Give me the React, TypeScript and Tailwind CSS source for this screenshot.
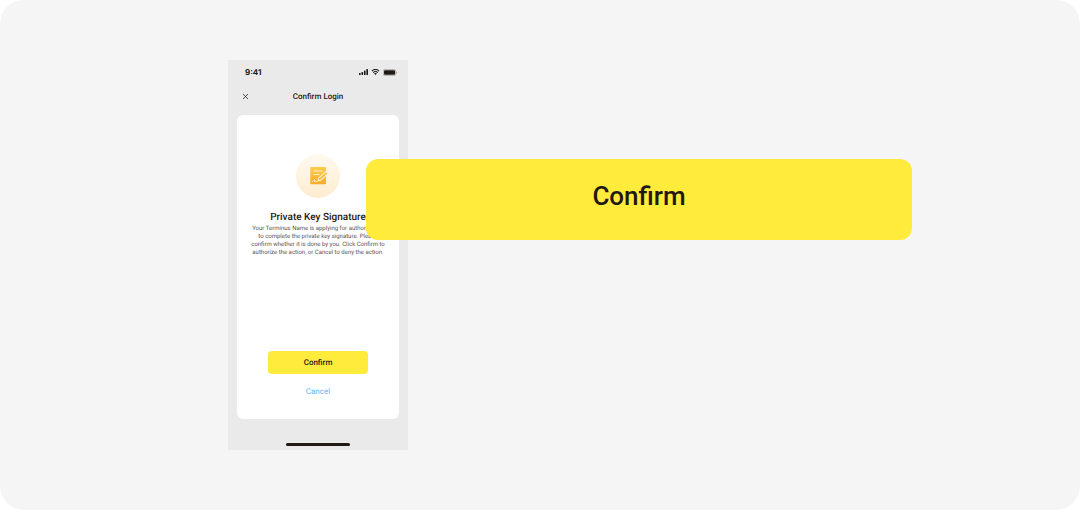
function StatusIcons() {
  return (
    <div className="flex items-center gap-[3px] text-[#1f1814]" aria-hidden="true">
      <svg className="h-[6px] w-[9px]" viewBox="0 0 18 12" fill="currentColor">
        <rect x="0" y="8" width="3.200" height="4" rx="1" />
        <rect x="5" y="6" width="3.200" height="6" rx="1" />
        <rect x="10" y="3" width="3.200" height="9" rx="1" />
        <rect x="14.800" y="0" width="3.200" height="12" rx="1" />
      </svg>
      <svg className="h-[6px] w-[9px]" viewBox="0 0 16 12" fill="none" stroke="currentColor" strokeWidth="2.200">
        <path d="M.8 4.200C5 .4 11 .4 15.200 4.200" />
        <path d="M3.400 7.200c2.600-2.400 6.600-2.400 9.200 0" />
        <path d="M5.400 9.100 8 11.800l2.600-2.700c-1.500-1.300-3.700-1.300-5.200 0Z" fill="currentColor" stroke="none" />
      </svg>
      <svg className="h-[7px] w-[14px]" viewBox="0 0 28 14">
        <rect x=".5" y=".8" width="25" height="12.400" rx="3.500" fill="none" stroke="currentColor" strokeOpacity=".5" />
        <rect x="2" y="2.300" width="22" height="9.400" rx="2" fill="currentColor" />
        <path d="M26.300 5v4c1-.4 1.500-1.100 1.500-2s-.5-1.600-1.500-2Z" fill="currentColor" fillOpacity=".5" />
      </svg>
    </div>
  );
}

function SignatureIcon() {
  return (
    <svg className="size-11" viewBox="0 0 44 44" aria-hidden="true">
      <defs>
        <linearGradient id="halo" x1="0" y1="0" x2="0" y2="1">
          <stop offset="0" stopColor="#fffaf0" />
          <stop offset="1" stopColor="#ffecd0" />
        </linearGradient>
        <linearGradient id="sheet" x1="0" y1="0" x2="0" y2="1">
          <stop offset="0" stopColor="#ffcd50" />
          <stop offset="1" stopColor="#fba924" />
        </linearGradient>
      </defs>
      <circle cx="22" cy="22" r="22" fill="url(#halo)" />
      <rect x="14.300" y="13" width="15.700" height="17.300" rx="1" fill="url(#sheet)" />
      <path d="M17.500 17h9M17.500 20.500h6" stroke="#fff3d6" strokeWidth="1.200" />
      <path d="M16.500 27.500c1-1.200 2.300-2 2.600-1.500.3.500-1.200 2-.5 2 .8 0 1.500-1 2.500-.5" fill="none" stroke="#fff3d6" strokeLinecap="round" />
      <path d="m22 27 .6-2.900 7.400-6.600 2 2-7.400 6.800Z" fill="#fdb93c" stroke="#fff2d6" strokeWidth="1.100" strokeLinejoin="round" />
    </svg>
  );
}

function Phone() {
  return (
    <section className="w-[180px] bg-[#eaeaea] pb-1" aria-label="Confirm Login">
      <div className="flex h-6 items-center justify-between pr-[11px] pl-[17px]">
        <span className="text-[8px] leading-3 font-bold font-[Inter,sans-serif]">9:41</span>
        <StatusIcons />
      </div>
      <header className="grid h-[31px] grid-cols-[1fr_auto_1fr] items-start px-[14px] pt-[7px]">
        <button type="button" aria-label="Close" className="flex h-[10px] w-[7px] items-center">
          <svg className="size-[7px]" viewBox="0 0 14 14" fill="none" stroke="#2b2522" strokeWidth="1.600">
            <path d="m2 2 10 10M12 2 2 12" />
          </svg>
        </button>
        <h1 className="text-[8px] leading-3 font-medium">Confirm Login</h1>
      </header>
      <div className="mx-[9px] flex h-[304px] flex-col items-center rounded-md bg-white pt-[39px]">
        <SignatureIcon />
        <h2 className="mt-[13px] text-[10px] leading-[14px] font-medium">Private Key Signature</h2>
        <p className="text-center text-[6px] leading-[8px] whitespace-nowrap text-[#5c5450]">
          Your Terminus Name is applying for authorization
          <br />
          to complete the private key signature. Please
          <br />
          confirm whether it is done by you. Click Confirm to
          <br />
          authorize the action, or Cancel to deny the action.
        </p>
        <div className="mt-auto flex w-[100px] flex-col items-center gap-3 pb-[21px]">
          <button
            type="button"
            className="h-[23px] w-full rounded-[4px] bg-[#ffeb3b] text-[8px] leading-3 font-medium [text-rendering:geometricPrecision]"
          >
            Confirm
          </button>
          <button type="button" className="text-[8px] leading-3 text-[#64b5f6] [text-rendering:geometricPrecision]">
            Cancel
          </button>
        </div>
      </div>
      <div className="mx-auto mt-6 h-[3px] w-16 rounded-full bg-[#1f1814]" />
    </section>
  );
}

export default function App() {
  return (
    <div className="bg-white font-[Roboto,sans-serif] text-[#1f1814] [text-rendering:geometricPrecision]">
      <main className="flex min-h-screen justify-center rounded-[24px] bg-[#f5f5f5] py-[60px] pl-[60px]">
        <div className="relative w-[684px]">
          <Phone />
          <button
            type="button"
            className="absolute top-[99px] right-0 left-[138px] h-[81px] rounded-xl bg-[#ffeb3b] pb-2 text-[26px] leading-8 font-medium"
          >
            Confirm
          </button>
        </div>
      </main>
    </div>
  );
}
